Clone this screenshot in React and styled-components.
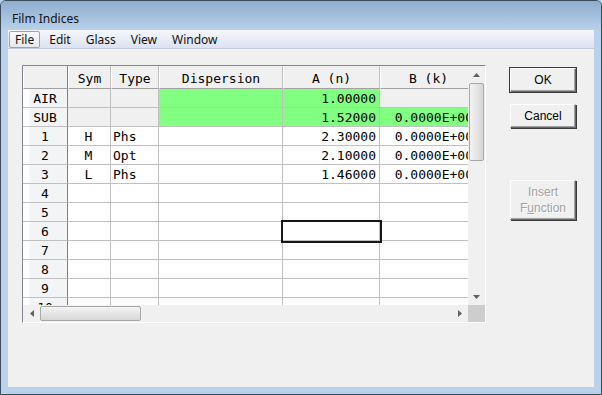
import React from "react";
import styled, { createGlobalStyle } from "styled-components";

const GlobalStyle = createGlobalStyle`
  html, body {
    margin: 0;
    padding: 0;
    background: #b9d1ea;
  }
  * {
    box-sizing: border-box;
  }
`;

const columns = [
  { key: "row", label: "", width: 45 },
  { key: "sym", label: "Sym", width: 43 },
  { key: "type", label: "Type", width: 48 },
  { key: "disp", label: "Dispersion", width: 124 },
  { key: "a", label: "A (n)", width: 97 },
  { key: "b", label: "B (k)", width: 97 },
];

const rows = [
  { row: "AIR", sym: "", type: "", disp: "", a: "1.00000", b: "", fill: { sym: "gray", type: "gray", disp: "green", a: "green", b: "gray" } },
  { row: "SUB", sym: "", type: "", disp: "", a: "1.52000", b: "0.0000E+00", fill: { sym: "gray", type: "gray", disp: "green", a: "green", b: "green" } },
  { row: "1", sym: "H", type: "Phs", disp: "", a: "2.30000", b: "0.0000E+00" },
  { row: "2", sym: "M", type: "Opt", disp: "", a: "2.10000", b: "0.0000E+00" },
  { row: "3", sym: "L", type: "Phs", disp: "", a: "1.46000", b: "0.0000E+00" },
  { row: "4" },
  { row: "5" },
  { row: "6", selected: "a" },
  { row: "7" },
  { row: "8" },
  { row: "9" },
  { row: "10" },
];

const fills = {
  green: "#80ff80",
  gray: "#f0f0f0",
  white: "#ffffff",
};

const aligns = {
  sym: "center",
  type: "left",
  disp: "left",
  a: "right",
  b: "right",
};

const Arrow = ({ dir }) => {
  const pts = {
    up: "0,4 7,4 3.5,0",
    down: "0,0 7,0 3.5,4",
    left: "4,0 4,7 0,3.5",
    right: "0,0 0,7 4,3.5",
  }[dir];
  const w = dir === "up" || dir === "down" ? 7 : 4;
  const h = dir === "up" || dir === "down" ? 4 : 7;
  return (
    <svg width={w} height={h} viewBox={`0 0 ${w} ${h}`}>
      <polygon points={pts} fill="#606060" />
    </svg>
  );
};

const App = () => {
  return (
    <>
      <GlobalStyle />
      <Window>
        <TitleBar>Film Indices</TitleBar>
        <MenuBar>
          <MenuItem active>File</MenuItem>
          <MenuItem>Edit</MenuItem>
          <MenuItem>Glass</MenuItem>
          <MenuItem>View</MenuItem>
          <MenuItem>Window</MenuItem>
        </MenuBar>
        <Client>
          <GridFrame>
            <Viewport>
              <Table>
                {columns.map((c) => (
                  <HeadCell key={c.key}>{c.label}</HeadCell>
                ))}
                {rows.map((r) =>
                  columns.map((c) =>
                    c.key === "row" ? (
                      <RowHead key={r.row + c.key}>{r.row}</RowHead>
                    ) : (
                      <Cell
                        key={r.row + c.key}
                        $fill={fills[(r.fill && r.fill[c.key]) || "white"]}
                        $align={aligns[c.key]}
                        $selected={r.selected === c.key}
                      >
                        {r[c.key]}
                      </Cell>
                    )
                  )
                )}
              </Table>
            </Viewport>
            <VScroll>
              <ArrowBox>
                <Arrow dir="up" />
              </ArrowBox>
              <VTrack>
                <VThumb />
              </VTrack>
              <ArrowBox>
                <Arrow dir="down" />
              </ArrowBox>
            </VScroll>
            <HScroll>
              <ArrowBox>
                <Arrow dir="left" />
              </ArrowBox>
              <HTrack>
                <HThumb />
              </HTrack>
              <ArrowBox>
                <Arrow dir="right" />
              </ArrowBox>
            </HScroll>
            <Corner />
          </GridFrame>
          <Buttons>
            <Button $default>OK</Button>
            <Button>Cancel</Button>
            <Button $tall disabled>
              Insert
              <br />
              F<u>u</u>nction
            </Button>
          </Buttons>
        </Client>
      </Window>
    </>
  );
};

export default App;

const Window = styled.div`
  width: 602px;
  height: 395px;
  display: flex;
  flex-direction: column;
  background: #b9d1ea;
  border: 1px solid #3c4a5a;
  border-radius: 6px 6px 0 0;
  padding: 0 7px 7px;
  overflow: hidden;
`;

const TitleBar = styled.div`
  height: 29px;
  margin: 0 -7px;
  padding: 9px 0 0 11px;
  background: linear-gradient(#8eadcf, #b9d1ea);
  font-family: "Noto Sans", "Liberation Sans", sans-serif;
  font-size: 12px;
  color: #111;
`;

const MenuBar = styled.div`
  height: 19px;
  display: flex;
  align-items: center;
  gap: 3px;
  padding-left: 1px;
  background: linear-gradient(#f5f7fc, #dbe2f1);
  border-bottom: 1px solid #c4ccdc;
  font-family: "Noto Sans", "Liberation Sans", sans-serif;
  font-size: 12px;
  color: #111;
`;

const MenuItem = styled.div`
  height: 17px;
  line-height: 15px;
  padding: 0 5px;
  border: 1px solid ${(p) => (p.active ? "#9aa3b2" : "transparent")};
  border-radius: 2px;
  background: ${(p) => (p.active ? "linear-gradient(#fbfbfc, #e6e8ec)" : "transparent")};
`;

const Client = styled.div`
  flex: 1;
  display: flex;
  align-items: flex-start;
  background: #f0f0f0;
  padding: 16px 0 0 14px;
`;

const GridFrame = styled.div`
  width: 464px;
  height: 258px;
  display: grid;
  grid-template-columns: 445px 17px;
  grid-template-rows: 239px 17px;
  border-top: 1px solid #828790;
  border-left: 1px solid #828790;
  border-right: 1px solid #ffffff;
  border-bottom: 1px solid #ffffff;
  background: #f0f0f0;
`;

const Viewport = styled.div`
  overflow: hidden;
  background: #ffffff;
`;

const Table = styled.div`
  display: grid;
  grid-template-columns: ${columns.map((c) => c.width + "px").join(" ")};
  grid-template-rows: 23px;
  grid-auto-rows: 19px;
  width: max-content;
  font-family: "DejaVu Sans Mono", "Liberation Mono", monospace;
  font-size: 13px;
  color: #000;
`;

const HeadCell = styled.div`
  display: flex;
  align-items: center;
  justify-content: center;
  padding-top: 3px;
  background: #f0f0f0;
  border-left: 1px solid #ffffff;
  border-right: 1px solid #c0c0c0;
  border-bottom: 1px solid #a0a0a0;
  white-space: pre;

  &:first-child {
    border-right-color: #808080;
  }
`;

const RowHead = styled.div`
  display: flex;
  align-items: center;
  justify-content: center;
  background: linear-gradient(90deg, #ffffff 0, #ffffff 6px, #f3f4f6 7px);
  border-right: 1px solid #808080;
  border-bottom: 1px solid #c0c0c0;
`;

const Cell = styled.div`
  display: flex;
  align-items: center;
  justify-content: ${(p) =>
    p.$align === "right" ? "flex-end" : p.$align === "center" ? "center" : "flex-start"};
  padding: 0 3px 0 2px;
  background: ${(p) => p.$fill};
  border-right: 1px solid #c0c0c0;
  border-bottom: 1px solid #c0c0c0;
  white-space: pre;
  position: ${(p) => (p.$selected ? "relative" : "static")};
  z-index: ${(p) => (p.$selected ? 1 : "auto")};
  outline: ${(p) => (p.$selected ? "2px solid #161616" : "none")};
`;

const VScroll = styled.div`
  display: flex;
  flex-direction: column;
  background: #f0f0f0;
`;

const HScroll = styled.div`
  display: flex;
  background: #f0f0f0;
`;

const ArrowBox = styled.div`
  width: 17px;
  height: 17px;
  flex: none;
  display: flex;
  align-items: center;
  justify-content: center;
`;

const VTrack = styled.div`
  flex: 1;
  padding: 0 1px;
`;

const VThumb = styled.div`
  height: 78px;
  border: 1px solid #a8a8a8;
  border-radius: 2px;
  background: linear-gradient(90deg, #f4f4f4, #e2e2e2 60%, #d6d6d6);
`;

const HTrack = styled.div`
  flex: 1;
  padding: 1px 0;
`;

const HThumb = styled.div`
  width: 101px;
  height: 15px;
  border: 1px solid #a8a8a8;
  border-radius: 2px;
  background: linear-gradient(#f4f4f4, #e2e2e2 60%, #d6d6d6);
`;

const Corner = styled.div`
  background: #cdcdcd;
`;

const Buttons = styled.div`
  display: flex;
  flex-direction: column;
  margin: 3px 0 0 24px;
  width: 66px;
`;

const Button = styled.button`
  height: ${(p) => (p.$tall ? "40px" : "24px")};
  margin-top: ${(p) => (p.$tall ? "40px" : "0")};
  margin-bottom: 12px;
  padding: 0;
  background: #f0f0f0;
  border: 1px solid;
  border-color: #ffffff #696969 #696969 #ffffff;
  box-shadow: ${(p) =>
    p.$default ? "0 0 0 1px #3a3a3a, inset -1px -1px 0 #a0a0a0" : "1px 1px 0 #3a3a3a, inset -1px -1px 0 #a0a0a0"};
  font-family: "Liberation Sans", "DejaVu Sans", sans-serif;
  font-size: 12px;
  line-height: 16px;
  color: #000;

  &:disabled {
    color: #a0a0a0;
    text-shadow: 1px 1px 0 #ffffff;
  }
`;
